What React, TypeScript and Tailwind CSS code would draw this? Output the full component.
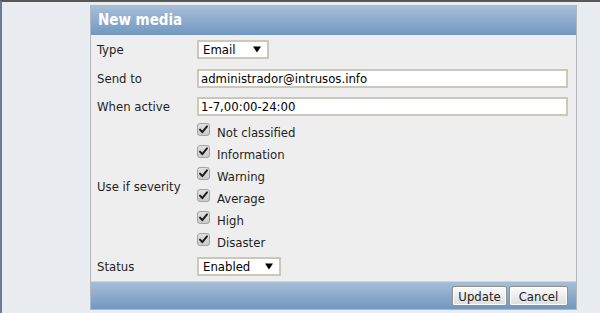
import React from 'react';

const SEVERITIES = ['Not classified', 'Information', 'Warning', 'Average', 'High', 'Disaster'];

function Arrow() {
  return (
    <svg width="8" height="7" viewBox="0 0 8 7" className="shrink-0">
      <path d="M0 0.5 H8 L4 6.5 Z" fill="#000" />
    </svg>
  );
}

function Select({ value, width }: { value: string; width: string }) {
  return (
    <div className={`${width} h-[19px] bg-white border-2 border-[#cbc7b9] flex items-center justify-between pl-[4px] pr-[6px] text-[13px] leading-none text-black`}>
      <span>{value}</span>
      <Arrow />
    </div>
  );
}

function Checkbox() {
  return (
    <svg width="13" height="13" viewBox="0 0 13 13" className="shrink-0">
      <defs>
        <linearGradient id="cb" x1="0" y1="0" x2="0" y2="1">
          <stop offset="0" stopColor="#e2e2e2" />
          <stop offset="1" stopColor="#c9c9c9" />
        </linearGradient>
      </defs>
      <rect x="0.5" y="0.5" width="12" height="12" rx="2.5" fill="url(#cb)" stroke="#a4a4a4" />
      <path d="M3 6.6 L5.3 9.2 L10 3.3" fill="none" stroke="#1a1a1a" strokeWidth="1.9" strokeLinecap="round" strokeLinejoin="round" />
    </svg>
  );
}

function Button({ label, width }: { label: string; width: string }) {
  return (
    <div className={`${width} h-[20px] border border-[#8f8f8f] rounded-[2px] bg-gradient-to-b from-[#fbfbfb] to-[#dedede] flex items-center justify-center text-[13px] text-[#222] leading-none shadow-[inset_0_0_0_1px_#ffffff]`}>
      {label}
    </div>
  );
}

export default function App() {
  return (
    <div
      className="w-[600px] h-[313px] bg-[#e9edf1] border-t-2 border-t-[#585858] border-l-2 border-l-[#6a7b97] overflow-hidden"
      style={{ fontFamily: '"DejaVu Sans Condensed", "DejaVu Sans", sans-serif' }}
    >
      <div className="ml-[88px] mt-[3px] w-[487px] h-[305px] border border-[#b2b8bf] flex flex-col">
        {/* Header */}
        <div className="h-[30px] bg-gradient-to-b from-[#a8bed7] to-[#7198c1] flex items-center pl-[7px] text-white font-bold text-[15px]">
          New media
        </div>

        {/* Form */}
        <div className="flex-1 bg-[#eeeeee] pl-[6px] pr-[8px] text-[13px] text-[#1e1e1e]">
          <div className="h-[29px] flex items-center">
            <div className="w-[100px]">Type</div>
            <Select value="Email" width="w-[72px]" />
          </div>
          <div className="h-[29px] flex items-center">
            <div className="w-[100px]">Send to</div>
            <div className="flex-1 h-[19px] bg-white border-2 border-[#cbc7b9] flex items-center pl-[2px] text-black text-[13px] leading-none">
              administrador@intrusos.info
            </div>
          </div>
          <div className="h-[28px] flex items-center">
            <div className="w-[100px]">When active</div>
            <div className="flex-1 h-[19px] bg-white border-2 border-[#cbc7b9] flex items-center pl-[2px] text-black text-[13px] leading-none">
              1-7,00:00-24:00
            </div>
          </div>
          <div className="flex items-center">
            <div className="w-[100px]">Use if severity</div>
            <div className="flex flex-col">
              {SEVERITIES.map((s) => (
                <div key={s} className="h-[22px] flex items-start gap-[7px]">
                  <div className="mt-[2px]">
                    <Checkbox />
                  </div>
                  <span className="leading-[22px] mt-[1px]">{s}</span>
                </div>
              ))}
            </div>
          </div>
          <div className="h-[28px] flex items-center">
            <div className="w-[100px]">Status</div>
            <Select value="Enabled" width="w-[84px]" />
          </div>
        </div>

        {/* Footer */}
        <div className="h-[29px] border-t border-[#cdd5de] bg-gradient-to-b from-[#a8bed7] to-[#7198c1] flex items-center justify-end gap-[2px] pr-[8px] pt-[2px]">
          <Button label="Update" width="w-[55px]" />
          <Button label="Cancel" width="w-[59px]" />
        </div>
      </div>
    </div>
  );
}
